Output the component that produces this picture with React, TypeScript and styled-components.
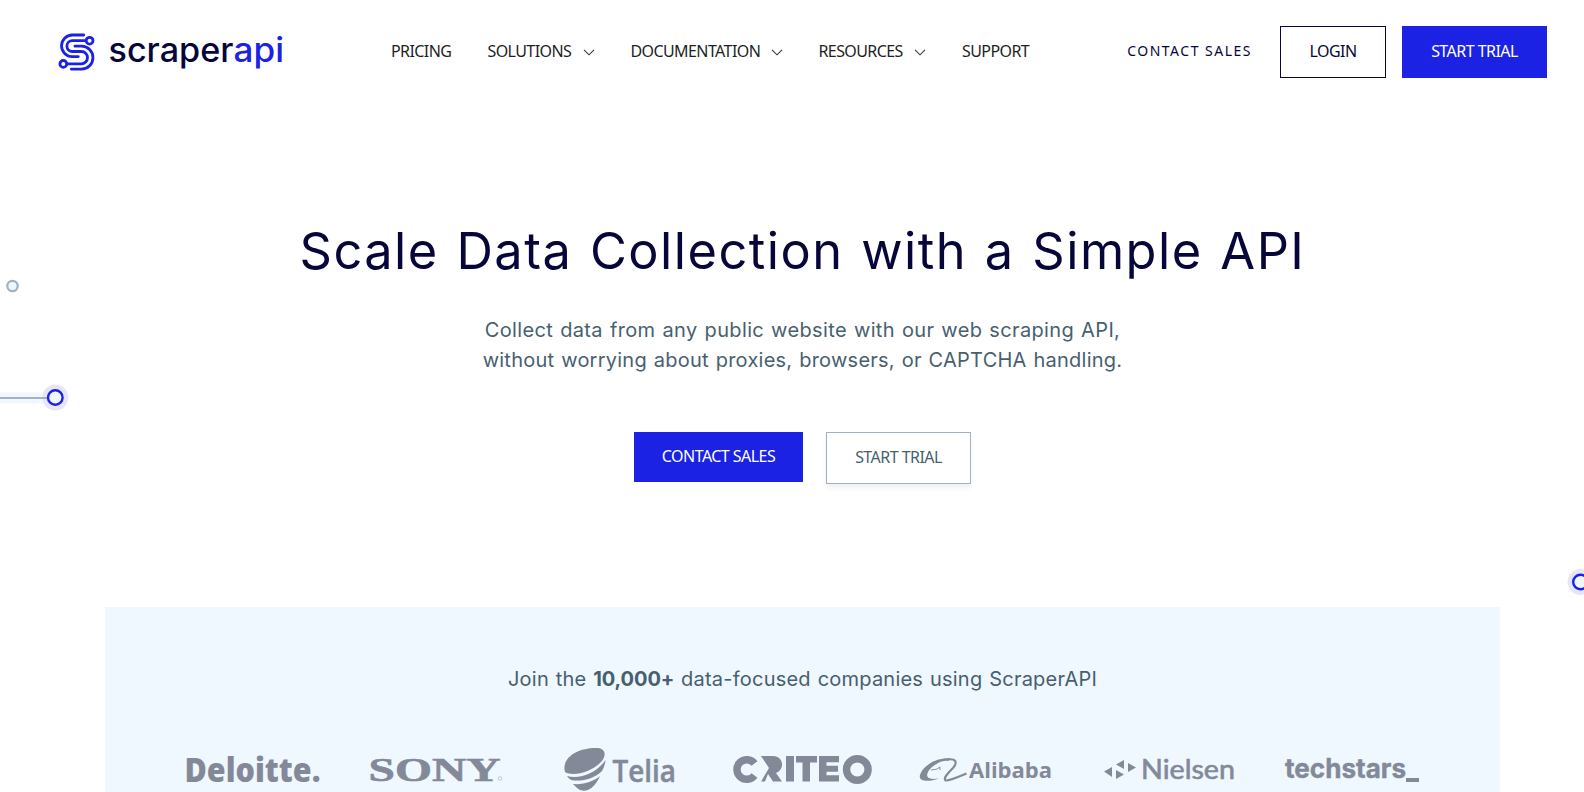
import React from "react";
import styled, { createGlobalStyle, css } from "styled-components";

const BLUE = "#1b22e4";
const NAVY = "#06063a";
const SLATE = "#475f6f";
const MUTED = "#838999";

const Global = createGlobalStyle`
  *, *::before, *::after { box-sizing: border-box; }
  body { margin: 0; background: #fff; overflow: hidden; }
`;

const Page = styled.div`
  position: relative;
  width: 100%;
  height: 792px;
  overflow: hidden;
  display: flex;
  flex-direction: column;
  font-family: "Noto Sans", sans-serif;
`;

const Header = styled.header`
  display: flex;
  align-items: center;
  height: 104px;
  flex: none;
  padding: 0 37px 0 56px;
`;

const Logo = styled.a`
  display: flex;
  width: 335px;
`;

const Nav = styled.nav`
  display: flex;
  align-items: center;
  gap: 36px;
  flex: 1;
`;

const NavItem = styled.a<{ $w: number }>`
  display: flex;
  align-items: center;
  justify-content: space-between;
  width: ${(p) => p.$w}px;
  padding-bottom: 2px;
  font-size: 16px;
  line-height: 24px;
  letter-spacing: -0.59px;
  white-space: nowrap;
  color: #1d1f24;

  svg {
    position: relative;
    top: 1px;
  }
`;

const Actions = styled.div`
  display: flex;
  align-items: center;
`;

const SalesLink = styled.a`
  font-size: 14px;
  letter-spacing: 1.5px;
  color: ${NAVY};
  margin-right: 28px;
  padding-bottom: 3px;
`;

const Button = styled.a<{ $w: number; $kind: "solid" | "dark" | "light" }>`
  display: flex;
  align-items: center;
  justify-content: center;
  width: ${(p) => p.$w}px;
  height: 52px;
  padding-bottom: 2px;
  font-size: 16px;
  letter-spacing: -0.54px;
  white-space: nowrap;
  ${(p) =>
    p.$kind === "solid" &&
    css`
      background: ${BLUE};
      color: #fff;
    `}
  ${(p) =>
    p.$kind === "dark" &&
    css`
      border: 1px solid ${NAVY};
      color: ${NAVY};
    `}
  ${(p) =>
    p.$kind === "light" &&
    css`
      border: 1px solid #9db2c2;
      color: ${SLATE};
      background: #fff;
      box-shadow: 0 4px 5px rgba(0, 0, 0, 0.06);
    `}
`;

const StartButton = styled(Button)`
  margin-left: 16px;
`;

const Hero = styled.main`
  display: flex;
  flex-direction: column;
  align-items: center;
  height: 503px;
  flex: none;
  padding: 117px 0 0 21px;
`;

const Title = styled.h1`
  margin: 0;
  font: 400 50.5px/60px Inter, sans-serif;
  letter-spacing: 1.48px;
  word-spacing: 2px;
  color: ${NAVY};
  white-space: nowrap;
`;

const Lead = styled.p`
  display: flex;
  flex-direction: column;
  align-items: center;
  margin: 34px 0 0;
  font: 400 20px/30px Inter, sans-serif;
  color: ${SLATE};
  white-space: nowrap;
`;

const LeadLine = styled.span<{ $tracking: number }>`
  letter-spacing: ${(p) => p.$tracking}px;
  word-spacing: 1px;
`;

const HeroActions = styled.div`
  display: flex;
  gap: 23px;
  margin-top: 57px;
`;

const HeroSolid = styled(Button)`
  height: 50px;
`;

const Clients = styled.section`
  width: 1395px;
  margin-left: 105px;
  flex: 1;
  background: #eff7ff;
  padding: 57px 79px 0;
`;

const Join = styled.p`
  margin: 0;
  font: 400 20px/30px Inter, sans-serif;
  letter-spacing: 0.22px;
  word-spacing: 1px;
  color: ${SLATE};
  text-align: center;

  b {
    letter-spacing: -0.1px;
  }
`;

const LogoRow = styled.div`
  display: flex;
  margin-top: 51px;
`;

const Brand = styled.svg<{ $gap?: number }>`
  display: block;
  overflow: visible;
  height: 50px;
  flex: none;
  margin-left: ${(p) => p.$gap ?? 0}px;
  fill: ${MUTED};
`;

const Decoration = styled.svg<{ $x: number; $y: number }>`
  position: absolute;
  left: ${(p) => p.$x}px;
  top: ${(p) => p.$y}px;
`;

const Chevron = () => (
  <svg width="12" height="8" viewBox="0 0 12 8" fill="none" stroke="#33363c" strokeWidth="1.1">
    <path d="M1 1.8 6 6.8 11 1.8" />
  </svg>
);

const ScraperLogo = () => (
  <svg width="230" height="44" viewBox="56 30 230 44">
    <g fill="none" stroke={BLUE} strokeWidth="2.8" strokeLinecap="round">
      <path d="M83.7 35H72.3a10.8 10.8 0 0 0 0 21.6h6" />
      <path d="M85.5 40.7H72.3a5.4 5.4 0 0 0 0 10.8h9a5.3 5.3 0 0 1 0 12.4H67.5" />
      <path d="M75 46.2h6.5a11.3 11.3 0 0 1 0 22.9H71.3" />
      <circle cx="89.6" cy="40.7" r="3.4" />
      <circle cx="63.3" cy="63.9" r="3.4" />
    </g>
    <g fontFamily="Inter, sans-serif" fontSize="33.5" fontWeight="500">
      <text x="108.5" y="62" fill={NAVY} textLength="125" lengthAdjust="spacingAndGlyphs">scraper</text>
      <text x="233.5" y="62" fill={BLUE} textLength="50.5" lengthAdjust="spacingAndGlyphs">api</text>
    </g>
  </svg>
);

const Halo = ({ cx, cy }: { cx: number; cy: number }) => (
  <circle cx={cx} cy={cy} r="13" fill="#e6e6fb" />
);

const Ring = ({ cx, cy }: { cx: number; cy: number }) => (
  <circle cx={cx} cy={cy} r="7.3" fill="#eff7ff" stroke={BLUE} strokeWidth="2.4" />
);

export default function App() {
  return (
    <Page>
      <Global />
      <Header>
        <Logo><ScraperLogo /></Logo>
        <Nav>
          <NavItem $w={60.5}>PRICING</NavItem>
          <NavItem $w={107}>SOLUTIONS<Chevron /></NavItem>
          <NavItem $w={152}>DOCUMENTATION<Chevron /></NavItem>
          <NavItem $w={107.5}>RESOURCES<Chevron /></NavItem>
          <NavItem $w={67}>SUPPORT</NavItem>
        </Nav>
        <Actions>
          <SalesLink>CONTACT SALES</SalesLink>
          <Button $w={106} $kind="dark">LOGIN</Button>
          <StartButton $w={145} $kind="solid">START TRIAL</StartButton>
        </Actions>
      </Header>
      <Hero>
        <Title>Scale Data Collection with a Simple API</Title>
        <Lead>
          <LeadLine $tracking={0.36}>Collect data from any public website with our web scraping API,</LeadLine>
          <LeadLine $tracking={0.24}>without worrying about proxies, browsers, or CAPTCHA handling.</LeadLine>
        </Lead>
        <HeroActions>
          <HeroSolid $w={169} $kind="solid">CONTACT SALES</HeroSolid>
          <Button $w={145} $kind="light">START TRIAL</Button>
        </HeroActions>
      </Hero>
      <Clients>
        <Join>Join the <b>10,000+</b> data-focused companies using ScraperAPI</Join>
        <LogoRow>
          <Brand width="136" viewBox="184 745 136 50">
            <text x="184.5" y="781.8" fontFamily="Open Sans, sans-serif" fontWeight="800" fontSize="33" textLength="136" lengthAdjust="spacingAndGlyphs">Deloitte.</text>
          </Brand>
          <Brand $gap={49} width="134" viewBox="369 745 134 50">
            <text x="368.5" y="780.5" fontFamily="Liberation Serif, serif" fontWeight="700" fontSize="33" textLength="132" lengthAdjust="spacingAndGlyphs" stroke={MUTED} strokeWidth=".6">SONY</text>
            <circle cx="500" cy="778.5" r="1.8" fill="none" stroke={MUTED} strokeWidth=".4" />
          </Brand>
          <Brand $gap={61} width="112" viewBox="564 745 112 50">
            <path d="M565 772C561 758 578 747 598 748C607 749 606 758 600 763C591 772 573 777 565 772Z" />
            <path d="M567 776C579 780 597 773 605.5 760Q605 766 602 771C594 779 581 782 571 780Q568 778 567 776Z" />
            <path d="M573 784C584 785 594 781 600 776Q595 787 588 790Q581 792 577 788Z" />
            <text x="612.5" y="781.8" fontFamily="Open Sans, sans-serif" fontWeight="600" fontSize="31" textLength="63.5" lengthAdjust="spacingAndGlyphs" stroke={MUTED} strokeWidth=".5">Telia</text>
          </Brand>
          <Brand $gap={56} width="140" viewBox="733 745 140 50">
            <g fill="none" stroke={MUTED} strokeWidth="7.4">
              <path d="M755.5 763.5A9.8 9.8 0 1 0 755.5 775.5" />
              <circle cx="858.3" cy="769.5" r="10.8" />
            </g>
            <path d="M762 756H774C785 756 786 770 777 773L783 781.5H774L769 774L766 781.5H762L770 768L762 756Z" />
            <path d="M787 756h8v25.5h-8zM797 756h21v6.5h-7v19h-7.5v-19H797zM820 756h20v6.2h-12.5v3.5H839v6h-11.5v3.6H840v6.2h-20z" />
          </Brand>
          <Brand $gap={47} width="132" viewBox="919 745 132 50">
            <path d="M951 758.5C936 757 923 766 920 775C918 782 929 782 939 778.5C930 780 925 778 928 772C932 765 942 760 948 761Z" />
            <path d="M947 759.5C956 758.5 958 762 953 768C947 774 943 778 945.5 780.5C949 781 958 777 966.5 773.5" fill="none" stroke={MUTED} strokeWidth="2.1" />
            <path d="M931 770Q937 770 940 767L940 770" fill="none" stroke={MUTED} strokeWidth=".9" />
            <text x="969" y="777.5" fontFamily="Open Sans, sans-serif" fontWeight="700" fontSize="21.5" textLength="83" lengthAdjust="spacingAndGlyphs">Alibaba</text>
          </Brand>
          <Brand $gap={53} width="130" viewBox="1104 745 130 50">
            <path d="M1104 771.5L1112 767v10zM1116 764.5L1124 760v9zM1116 770L1124 774.5L1116 779zM1128 763L1136 767.5L1128 772z" />
            <text x="1141" y="779" fontFamily="Lato, sans-serif" fontWeight="400" fontSize="26" textLength="94" lengthAdjust="spacingAndGlyphs" stroke={MUTED} strokeWidth=".6">Nielsen</text>
          </Brand>
          <Brand $gap={51} width="134" viewBox="1285 745 134 50">
            <text x="1285" y="778" fontFamily="Inter, sans-serif" fontWeight="700" fontSize="27" textLength="121" lengthAdjust="spacingAndGlyphs" stroke={MUTED} strokeWidth=".4">techstars</text>
            <rect x="1406" y="778" width="13" height="4" />
          </Brand>
        </LogoRow>
      </Clients>
      <Decoration $x={0} $y={270} width="80" height="150" viewBox="0 270 80 150">
        <circle cx="12.5" cy="286" r="5.2" fill="#eff7ff" stroke="#9fb3c3" strokeWidth="2.2" />
        <path d="M0 392.5h50v11H0z" fill="#eff7ff" />
        <Halo cx={55.3} cy={397.5} />
        <path d="M0 398h50" stroke="#9fb3c3" strokeWidth="2" />
        <Ring cx={55.3} cy={397.5} />
      </Decoration>
      <Decoration $x={1560} $y={560} width="24" height="44" viewBox="1560 560 24 44">
        <Halo cx={1580.5} cy={582} />
        <Ring cx={1580.5} cy={582} />
      </Decoration>
    </Page>
  );
}
